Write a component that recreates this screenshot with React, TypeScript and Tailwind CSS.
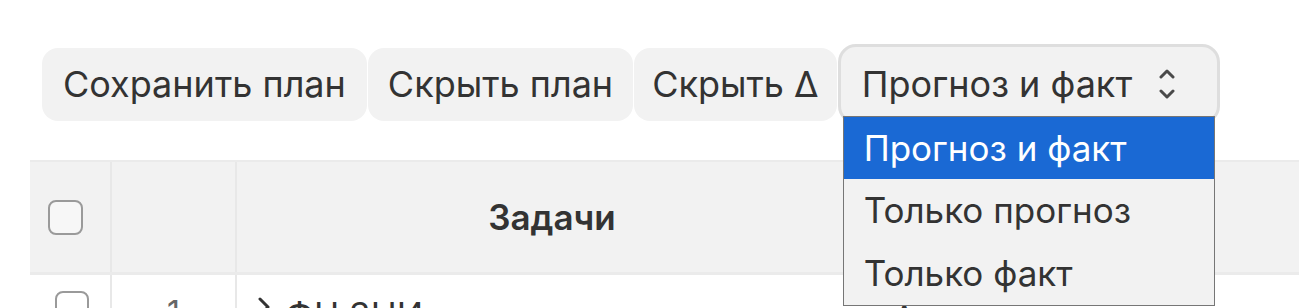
import React from "react";

const font = { fontFamily: "Inter, 'Noto Sans', sans-serif" };

function UpDown() {
  return (
    <svg width="16" height="30" viewBox="0 0 16 30" fill="none" stroke="#4a4a4a" strokeWidth="3" strokeLinecap="round" strokeLinejoin="round">
      <path d="M2 8 L8 2 L14 8" />
      <path d="M2 22 L8 28 L14 22" />
    </svg>
  );
}

function Chevron() {
  return (
    <svg width="14" height="22" viewBox="0 0 14 22" fill="none" stroke="#333" strokeWidth="3" strokeLinecap="round" strokeLinejoin="round">
      <path d="M3 3 L11 11 L3 19" />
    </svg>
  );
}

function Box({ className = "" }: { className?: string }) {
  return <div className={`rounded-[8px] border-2 border-[#9a9a9a] bg-[#f7f7f7] ${className}`} />;
}

export default function App() {
  const options = ["Прогноз и факт", "Только прогноз", "Только факт"];
  return (
    <div className="w-[1299px] h-[308px] overflow-hidden bg-white text-[#333]" style={font}>
      <div className="flex items-center gap-[1px] pl-[42px] pt-[44px]">
        <button className="h-[73px] px-[21px] rounded-[16px] bg-[#f2f2f2] text-[36px]">Сохранить план</button>
        <button className="h-[73px] px-[20px] rounded-[16px] bg-[#f2f2f2] text-[36px]">Скрыть план</button>
        <button className="h-[73px] px-[18px] rounded-[16px] bg-[#f2f2f2] text-[36px]">Скрыть Δ</button>
        <div className="relative">
          <div className="h-[80px] w-[382px] flex items-center justify-between pl-[21px] pr-[42px] rounded-[18px] border-[3px] border-[#dedede] bg-[#f2f2f2] text-[36px]">
            <span>Прогноз и факт</span>
            <UpDown />
          </div>
          <div className="absolute left-[5px] top-[72px] w-[372px] z-10 border border-[#767676] bg-[#f2f2f2]">
            {options.map((o, i) => (
              <div
                key={o}
                className={`flex items-center pl-[20px] text-[35px] ${i === 0 ? "h-[62px] bg-[#1a69d4] text-white" : "h-[63px] text-[#333]"}`}
              >
                {o}
              </div>
            ))}
          </div>
        </div>
      </div>

      <div className="ml-[30px] mt-[36px]">
        <div className="flex h-[115px] bg-[#f2f2f2] border-t-2 border-b-[3px] border-[#ebebeb]">
          <div className="w-[82px] shrink-0 flex items-center justify-center border-r-2 border-[#e8e8e8]">
            <Box className="w-[35px] h-[35px] -translate-x-[5px]" />
          </div>
          <div className="w-[125px] shrink-0 border-r-2 border-[#e8e8e8]" />
          <div className="w-[630px] shrink-0 flex items-center justify-center text-[35px] font-semibold">Задачи</div>
          <div className="flex-1" />
        </div>
        <div className="flex h-[60px] bg-white">
          <div className="w-[82px] shrink-0 pt-[16px] pl-[25px] border-r-2 border-[#e8e8e8]">
            <Box className="w-[34px] h-[34px] bg-white" />
          </div>
          <div className="w-[125px] shrink-0 pt-[14px] text-center text-[32px] text-[#666] border-r-2 border-[#e8e8e8]">1</div>
          <div className="w-[630px] shrink-0 pt-[21px] pl-[20px] flex items-start gap-[14px] text-[35px]">
            <Chevron />
            <span className="-mt-[7px]">ФЦ ЗНИ</span>
          </div>
          <div className="flex-1 pt-[18px] pl-[6px] text-[35px] whitespace-nowrap">«Администратор проекта»</div>
        </div>
      </div>
    </div>
  );
}
